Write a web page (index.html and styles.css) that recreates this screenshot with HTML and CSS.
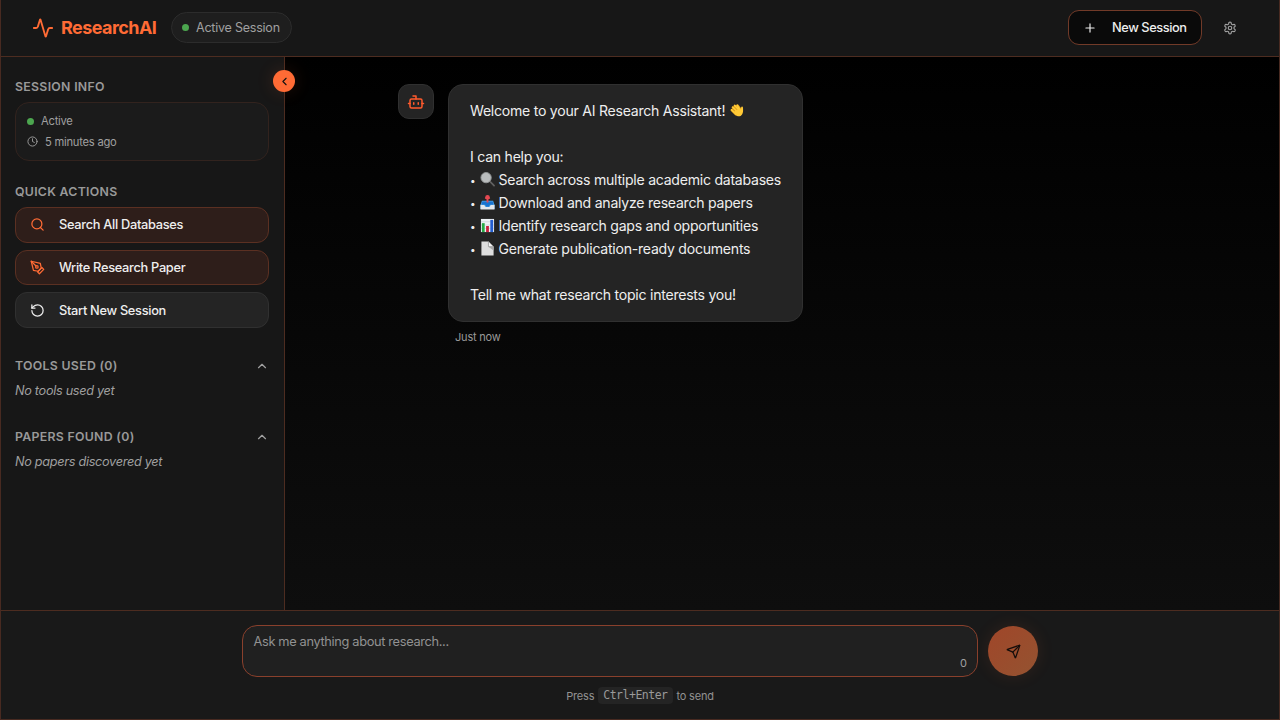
FILE: index.html
```html
<!DOCTYPE html>
<html lang="en">
<head>
<meta charset="utf-8">
<title>ResearchAI</title>
<link rel="stylesheet" href="styles.css">
</head>
<body>
<div class="app">
  <header class="header">
    <div class="brand">
      <svg class="icon brand-icon" viewBox="0 0 24 24"><path d="M22 12h-2.500a2 2 0 0 0-1.900 1.500l-2.400 7.800a.25.25 0 0 1-.48 0L9.240 2.700a.25.25 0 0 0-.48 0l-2.350 7.800A2 2 0 0 1 4.500 12H2"/></svg>
      <span class="brand-name">ResearchAI</span>
    </div>
    <div class="status-pill"><i class="dot"></i><span>Active Session</span></div>
    <button class="new-session">
      <svg class="icon plus-icon" viewBox="0 0 24 24"><path d="M5 12h14M12 5v14"/></svg>
      <span>New Session</span>
    </button>
    <svg class="icon gear-icon" viewBox="0 0 24 24"><path d="M12.2 2h-.4a2 2 0 0 0-2 2v.2a2 2 0 0 1-1 1.7l-.4.3a2 2 0 0 1-2 0l-.2-.1a2 2 0 0 0-2.7.7l-.2.4a2 2 0 0 0 .7 2.700l.2.100a2 2 0 0 1 1 1.700v.500a2 2 0 0 1-1 1.800l-.2.100a2 2 0 0 0-.7 2.700l.2.400a2 2 0 0 0 2.700.700l.2-.100a2 2 0 0 1 2 0l.4.300a2 2 0 0 1 1 1.700v.200a2 2 0 0 0 2 2h.4a2 2 0 0 0 2-2v-.200a2 2 0 0 1 1-1.700l.4-.300a2 2 0 0 1 2 0l.2.100a2 2 0 0 0 2.700-.700l.2-.400a2 2 0 0 0-.7-2.700l-.2-.100a2 2 0 0 1-1-1.800v-.500a2 2 0 0 1 1-1.700l.2-.100a2 2 0 0 0 .7-2.700l-.2-.400a2 2 0 0 0-2.700-.700l-.2.100a2 2 0 0 1-2 0l-.4-.300a2 2 0 0 1-1-1.700V4a2 2 0 0 0-2-2z"/><circle cx="12" cy="12" r="3"/></svg>
  </header>

  <div class="body">
    <aside class="sidebar">
      <h3 class="section-title">SESSION INFO</h3>
      <div class="info-card">
        <div class="info-row"><i class="dot"></i><span>Active</span></div>
        <div class="info-row"><svg class="icon clock-icon" viewBox="0 0 24 24"><circle cx="12" cy="12" r="10"/><path d="M12 6v6l4 2"/></svg><span>5 minutes ago</span></div>
      </div>
      <h3 class="section-title">QUICK ACTIONS</h3>
      <div class="actions">
        <button class="action primary"><svg class="icon" viewBox="0 0 24 24"><circle cx="11" cy="11" r="8"/><path d="m21 21-4.3-4.3"/></svg><span>Search All Databases</span></button>
        <button class="action primary"><svg class="icon" viewBox="0 0 24 24"><path d="m12 19 7-7 3 3-7 7-3-3z"/><path d="m18 13-1.500-7.500L2 2l3.500 14.500L13 18l5-5z"/><path d="m2 2 7.586 7.586"/><circle cx="11" cy="11" r="2"/></svg><span>Write Research Paper</span></button>
        <button class="action"><svg class="icon" viewBox="0 0 24 24"><path d="M3 12a9 9 0 1 0 9-9 9.750 9.750 0 0 0-6.740 2.740L3 8"/><path d="M3 3v5h5"/></svg><span>Start New Session</span></button>
      </div>
      <div class="fold">
        <h3 class="section-title">TOOLS USED (0)</h3>
        <svg class="icon chevron" viewBox="0 0 24 24"><path d="m18 15-6-6-6 6"/></svg>
      </div>
      <p class="empty">No tools used yet</p>
      <div class="fold">
        <h3 class="section-title">PAPERS FOUND (0)</h3>
        <svg class="icon chevron" viewBox="0 0 24 24"><path d="m18 15-6-6-6 6"/></svg>
      </div>
      <p class="empty">No papers discovered yet</p>
      <button class="collapse"><svg class="icon" viewBox="0 0 24 24"><path d="m15 18-6-6 6-6"/></svg></button>
    </aside>

    <main class="chat">
      <div class="avatar"><svg class="icon" viewBox="0 0 24 24"><path d="M12 8V4H8"/><rect x="4" y="8" width="16" height="12" rx="2"/><path d="M2 14h2M20 14h2M15 13v2M9 13v2"/></svg></div>
      <div class="message">
        <div class="bubble">
          <p><span>Welcome to your AI Research Assistant!</span>
            <svg class="emoji" viewBox="0 0 16 16"><path d="M3 7.500 7.500 12M4.200 4.800l5 5M6.200 3l5 5M9 2.700l3 4" stroke="#e9a51d" stroke-width="2.700" stroke-linecap="round"/><path d="m2.700 7.200 4.500 4.600M4 4.500l5 5M6 2.700l5 5M8.800 2.500l3.200 5" stroke="#ffcf3d" stroke-width="1.500" stroke-linecap="round"/><path d="M5 9.500 11 5.500l1.600 2 .4-3c.3-1.300 1.800-1.100 1.900.2.200 2.500.4 5.500-1 7.500-1.700 2.600-4.700 2.600-6.900.300z" fill="#ffc935"/></svg></p>
          <p></p>
          <p><span>I can help you:</span></p>
          <p><b class="bullet">•</b><svg class="emoji" viewBox="0 0 16 16"><path d="m10.500 10 4.500 4.500" stroke="#626262" stroke-width="1.800" stroke-linecap="round"/><circle cx="6.500" cy="6" r="5.500" fill="#b9bcbd" stroke="#929596" stroke-width="1"/></svg><span>Search across multiple academic databases</span></p>
          <p><b class="bullet">•</b><svg class="emoji" viewBox="0 0 16 16"><path d="m2 6-1.500 5v4h15v-4L14 6z" fill="#4aa5eb"/><path d="M.5 10.500h4l1 2h5l1-2h4v5H.5z" fill="#e3e7eb"/><path d="M2.500 7h11l1 3.500h-4l-1 2h-3l-1-2h-4z" fill="#1873cf"/><path d="M7 8V4H5l3-3.500L11 4H9v4z" fill="#e44851"/><circle cx="8" cy="2.500" r="2.400" fill="#e44851"/></svg><span>Download and analyze research papers</span></p>
          <p><b class="bullet">•</b><svg class="emoji" viewBox="0 0 16 16"><path d="M1 1h14v14H1z" fill="#eef2f5"/><path d="M1 4h14M1 7.500h14M1 11h14" stroke="#bdc9d1" stroke-width=".6"/><path d="M2 5.500h3V15H2z" fill="#28a946"/><path d="M6.500 8.500h3V15h-3z" fill="#c91f3d"/><path d="M11 2h3v13h-3z" fill="#245ed0"/></svg><span>Identify research gaps and opportunities</span></p>
          <p><b class="bullet">•</b><svg class="emoji" viewBox="0 0 16 16"><path d="M1.500.5H9L14.500 6v9.500h-13z" fill="#dedede"/><path d="M9 .5V6h5.500z" fill="#f5f5f5" stroke="#888" stroke-width=".7"/><path d="M9 6h5.500v4z" fill="#a8a8a8"/></svg><span>Generate publication-ready documents</span></p>
          <p></p>
          <p><span>Tell me what research topic interests you!</span></p>
        </div>
        <div class="stamp">Just now</div>
      </div>
    </main>
  </div>

  <footer class="composer">
    <div class="composer-row">
      <div class="input"><span class="placeholder">Ask me anything about research...</span><span class="count">0</span></div>
      <button class="send"><svg class="icon" viewBox="0 0 24 24"><path d="M14.536 21.686a.5.5 0 0 0 .937-.024l6.500-19a.496.496 0 0 0-.635-.635l-19 6.500a.5.5 0 0 0-.024.937l7.930 3.180a2 2 0 0 1 1.112 1.110z"/><path d="m21.854 2.147-10.940 10.939"/></svg></button>
    </div>
    <div class="hint"><span>Press</span><kbd>Ctrl+Enter</kbd><span>to send</span></div>
  </footer>
</div>
</body>
</html>
```

FILE: styles.css
```css
* { box-sizing: border-box; margin: 0; padding: 0; }
body {
  width: 1280px; height: 720px; overflow: hidden; background: #000;
  font-family: Inter, "Liberation Sans", sans-serif; color: #eee;
}
button { font: inherit; color: inherit; }
.app {
  display: flex; flex-direction: column; width: 1280px; height: 720px;
  border: 1px solid #482a21; border-top: 0;
}
.icon { flex: none; fill: none; stroke: currentColor; stroke-width: 2; stroke-linecap: round; stroke-linejoin: round; }
.dot { flex: none; width: 7px; height: 7px; border-radius: 50%; background: #4ca64f; }

.header {
  display: flex; align-items: center; flex: none; height: 57px;
  padding: 0 35px 1px 31px; background: #171717; border-bottom: 1px solid #4d2c20;
}
.brand { display: flex; align-items: center; gap: 7px; width: 139px; color: #ff6b35; }
.brand-icon { width: 22px; height: 22px; }
.brand-name { font-size: 18px; font-weight: 700; letter-spacing: -0.56px; white-space: nowrap; }
.status-pill {
  display: flex; align-items: center; gap: 7px; width: 121px; height: 31px;
  padding-left: 10px; border: 1px solid #2c2c2c; border-radius: 16px;
  background: #1e1e1e; color: #a0a0a0; font-size: 12.500px; letter-spacing: -0.22px; white-space: nowrap;
}
.new-session {
  display: flex; align-items: center; width: 134px; height: 35px; margin-left: auto;
  padding-left: 14px; gap: 15px; border: 1px solid #713a28; border-radius: 11px;
  background: #0a0a0a; font-size: 12.800px; font-weight: 500; letter-spacing: -0.42px; white-space: nowrap;
}
.plus-icon { width: 14px; height: 14px; }
.gear-icon { width: 14px; height: 14px; margin: 0 7px 0 21px; color: #a0a0a0; }

.body { display: flex; flex: none; height: 553px; }
.sidebar {
  position: relative; flex: none; width: 284px; padding: 21px 15px 0 14px;
  background: #171717; border-right: 1px solid #4d2c20;
}
.section-title { height: 18px; line-height: 18px; font-size: 12.300px; font-weight: 600; letter-spacing: 0.3px; color: #999; white-space: nowrap; }
.info-card {
  display: flex; flex-direction: column; gap: 4px; height: 59px; margin: 6px 0 22px; padding: 10px 11px;
  border: 1px solid #32231e; border-radius: 14px; background: #1b1b1b;
}
.info-row { display: flex; align-items: center; gap: 7px; height: 18px; font-size: 11.200px; letter-spacing: -0.24px; color: #a0a0a0; }
.clock-icon { width: 11px; height: 11px; }
.actions { display: flex; flex-direction: column; gap: 7px; margin: 6px 0 29px; }
.action {
  display: flex; align-items: center; gap: 14px; height: 35.700px; padding-left: 14px;
  border: 1px solid #303030; border-radius: 12px; background: #242424;
  font-size: 12.800px; font-weight: 500; letter-spacing: -0.3px; white-space: nowrap;
}
.action .icon { width: 15px; height: 15px; }
.action.primary { background: #2e1e1a; border-color: #5b3022; }
.action.primary .icon { color: #ff6b35; }
.fold { display: flex; align-items: center; justify-content: space-between; height: 18px; }
.chevron { width: 14px; height: 14px; color: #a0a0a0; }
.empty { height: 18px; margin: 7px 0 28px; line-height: 18px; font-size: 12.700px; letter-spacing: -0.3px; font-style: italic; color: #a0a0a0; white-space: nowrap; }
.collapse {
  position: absolute; z-index: 2; top: 13px; right: -11px; width: 22px; height: 22px;
  display: flex; align-items: center; justify-content: center; border: 0; border-radius: 50%;
  background: #ff6b35; color: #111; box-shadow: 0 0 18px rgba(255,107,53,.15);
}
.collapse .icon { width: 13px; height: 13px; }

.chat { display: flex; flex: 1; align-items: flex-start; gap: 14px; padding: 27px 0 0 113px; background: linear-gradient(#000, #0e0e0e); }
.avatar {
  display: flex; align-items: center; justify-content: center; flex: none; width: 36px; height: 35px;
  border: 1px solid #303030; border-radius: 11px; background: #242424; color: #ff5a2c;
}
.avatar .icon { width: 18px; height: 18px; }
.bubble { width: 355px; height: 238px; padding: 14px 21px; border: 1px solid #303030; border-radius: 15px; background: #242424; }
.bubble p { display: flex; align-items: center; height: 23px; font-size: 14.100px; letter-spacing: -0.26px; color: #eee; white-space: nowrap; }
.bullet { flex: none; width: 10px; font-size: 10px; font-weight: 400; }
.emoji { flex: none; width: 15px; height: 15px; margin-right: 3.500px; fill: none; }
.bubble p > span + .emoji { margin-left: 4px; }
.stamp { margin: 8px 0 0 7px; font-size: 11px; line-height: 14px; letter-spacing: -0.2px; color: #999; }

.composer { flex: 1; padding: 14px 0 0 241px; border-top: 1px solid #4d2c20; background: #191919; }
.composer-row { display: flex; align-items: center; gap: 10px; height: 52px; }
.input {
  display: flex; justify-content: space-between; width: 736px; height: 52px; padding: 8px 10px 6px 10.500px;
  border: 1px solid #8a402c; border-radius: 15px; background: #202020; color: #929292;
}
.placeholder { font-size: 12.800px; line-height: 16px; letter-spacing: -0.34px; white-space: nowrap; }
.count { align-self: flex-end; font-size: 11px; line-height: 14px; color: #a0a0a0; }
.send {
  display: flex; align-items: center; justify-content: center; width: 50px; height: 50px;
  border: 0; border-radius: 50%; background: linear-gradient(135deg, #a04629, #945331);
  color: #160e0b; box-shadow: 0 0 18px rgba(255,107,53,.1);
}
.send .icon { width: 15px; height: 15px; }
.hint { display: flex; align-items: center; justify-content: center; gap: 4px; width: 796px; height: 17px; margin-top: 10px; font-size: 11px; letter-spacing: -0.2px; color: #929292; }
.hint kbd { padding: 1px 5px; border-radius: 4px; background: #242424; font: 11.500px/15px "DejaVu Sans Mono", monospace; letter-spacing: -0.5px; color: #999; }
```
